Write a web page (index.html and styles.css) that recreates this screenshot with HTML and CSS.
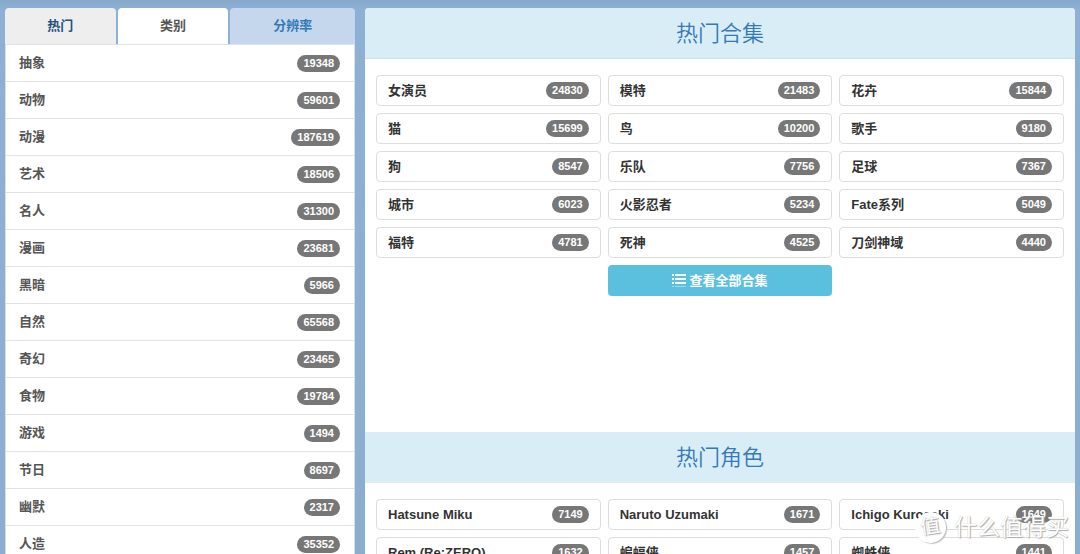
FILE: index.html
```html
<!DOCTYPE html>
<html lang="zh-CN">
<head>
<meta charset="utf-8">
<meta name="viewport" content="width=device-width, initial-scale=1">
<title>热门合集</title>
<link rel="stylesheet" href="styles.css">
</head>
<body>
<div class="page">
  <aside class="sidebar">
    <nav class="tabs">
      <button class="tab tab-hot" type="button">热门</button>
      <button class="tab tab-active" type="button">类别</button>
      <button class="tab tab-wide" type="button">分辨率</button>
    </nav>
    <div class="categories">
      <a class="category" href="#">抽象<span class="badge">19348</span></a>
      <a class="category" href="#">动物<span class="badge">59601</span></a>
      <a class="category" href="#">动漫<span class="badge">187619</span></a>
      <a class="category" href="#">艺术<span class="badge">18506</span></a>
      <a class="category" href="#">名人<span class="badge">31300</span></a>
      <a class="category" href="#">漫画<span class="badge">23681</span></a>
      <a class="category" href="#">黑暗<span class="badge">5966</span></a>
      <a class="category" href="#">自然<span class="badge">65568</span></a>
      <a class="category" href="#">奇幻<span class="badge">23465</span></a>
      <a class="category" href="#">食物<span class="badge">19784</span></a>
      <a class="category" href="#">游戏<span class="badge">1494</span></a>
      <a class="category" href="#">节日<span class="badge">8697</span></a>
      <a class="category" href="#">幽默<span class="badge">2317</span></a>
      <a class="category" href="#">人造<span class="badge">35352</span></a>
    </div>
  </aside>
  <main class="content">
    <section class="collections">
      <h2 class="heading">热门合集</h2>
      <div class="cards">
        <a class="card" href="#">女演员<span class="badge">24830</span></a>
        <a class="card" href="#">模特<span class="badge">21483</span></a>
        <a class="card" href="#">花卉<span class="badge">15844</span></a>
        <a class="card" href="#">猫<span class="badge">15699</span></a>
        <a class="card" href="#">鸟<span class="badge">10200</span></a>
        <a class="card" href="#">歌手<span class="badge">9180</span></a>
        <a class="card" href="#">狗<span class="badge">8547</span></a>
        <a class="card" href="#">乐队<span class="badge">7756</span></a>
        <a class="card" href="#">足球<span class="badge">7367</span></a>
        <a class="card" href="#">城市<span class="badge">6023</span></a>
        <a class="card" href="#">火影忍者<span class="badge">5234</span></a>
        <a class="card" href="#">Fate系列<span class="badge">5049</span></a>
        <a class="card" href="#">福特<span class="badge">4781</span></a>
        <a class="card" href="#">死神<span class="badge">4525</span></a>
        <a class="card" href="#">刀剑神域<span class="badge">4440</span></a>
        <a class="view-all" href="#">
          <svg class="list-icon" viewBox="0 0 14 13" aria-hidden="true">
            <path d="M0 0h2v2H0zM3 0h11v2H3zM0 4h2v2H0zM3 4h11v2H3zM0 8h2v2H0zM3 8h11v2H3z"/>
            <path class="list-icon-faint" d="M0 12h2v1H0zM3 12h11v1H3z"/>
          </svg>
          查看全部合集
        </a>
      </div>
    </section>
    <section class="characters">
      <h2 class="heading">热门角色</h2>
      <div class="cards">
        <a class="card" href="#">Hatsune Miku<span class="badge">7149</span></a>
        <a class="card" href="#">Naruto Uzumaki<span class="badge">1671</span></a>
        <a class="card" href="#">Ichigo Kurosaki<span class="badge">1649</span></a>
        <a class="card" href="#">Rem (Re:ZERO)<span class="badge">1632</span></a>
        <a class="card" href="#">蝙蝠侠<span class="badge">1457</span></a>
        <a class="card" href="#">蜘蛛侠<span class="badge">1441</span></a>
      </div>
    </section>
  </main>
  <div class="watermark"><span class="watermark-mark">值</span><span class="watermark-text">什么值得买</span></div>
</div>
</body>
</html>
```
FILE: styles.css
```css
* {
  box-sizing: border-box;
}

body {
  margin: 0;
  background: #8badd0 linear-gradient(#86a9cc, #8db0d4 10px, #8badd0);
  color: #333;
  font: bold 13px/20px "Liberation Sans", "Noto Sans CJK SC", sans-serif;
}

a {
  color: inherit;
  text-decoration: none;
}

.page {
  position: relative;
  display: grid;
  grid-template-columns: 350fr 710fr;
  gap: 10px;
  height: 100vh;
  padding: 8px 5px 0;
  overflow: hidden;
}

.sidebar {
  min-width: 0;
}

.tabs {
  display: grid;
  grid-template-columns: 111fr 111fr 125fr;
  gap: 2px;
}

.tab {
  height: 36px;
  padding: 0;
  border: 0;
  border-radius: 4px 4px 0 0;
  font: inherit;
}

.tab-hot {
  background: #eee;
  color: #23527c;
}

.tab-active {
  background: #fff;
  color: #555;
}

.tab-wide {
  background: #c5d7ec;
  color: #337ab7;
}

.categories {
  border: 1px solid #ddd;
  border-top: 0;
  background: #fff;
}

.category {
  display: flex;
  align-items: center;
  justify-content: space-between;
  height: 37px;
  padding: 0 14px 0 13px;
  border-top: 1px solid #e2e2e2;
  color: #555;
}

.badge {
  padding: 0 6px;
  border-radius: 9px;
  background: #777;
  color: #fff;
  font-size: 11px;
  line-height: 17px;
}

.content {
  min-width: 0;
  border-radius: 4px 4px 0 0;
  background: #fff;
  overflow: hidden;
}

.collections {
  min-height: 424px;
}

.heading {
  margin: 0;
  padding: 11px 10px 9px;
  border-bottom: 1px solid #c4e8f0;
  background: #d9edf7;
  color: #337ab7;
  font-size: 22px;
  font-weight: 350;
  line-height: 30px;
  text-align: center;
}

.characters .heading {
  border-bottom-color: #d9edf7;
}

.cards {
  display: grid;
  grid-template-columns: repeat(3, 1fr);
  gap: 7px;
  padding: 16px 11px;
}

.card {
  display: flex;
  align-items: center;
  justify-content: space-between;
  height: 31px;
  padding: 0 11px;
  border: 1px solid #ddd;
  border-radius: 4px;
}

.view-all {
  grid-column: 2;
  display: flex;
  align-items: center;
  justify-content: center;
  gap: 3px;
  height: 31px;
  border-radius: 4px;
  background: #5bc0de;
  color: #fff;
}

.list-icon {
  width: 14px;
  height: 13px;
  fill: #fff;
}

.list-icon-faint {
  opacity: 0.4;
}

.watermark {
  position: absolute;
  right: 11px;
  bottom: 11px;
  display: flex;
  align-items: center;
  gap: 8px;
  color: #fff;
  font-size: 23px;
  font-weight: 400;
  line-height: 32px;
  text-shadow: 1px 1px 1px #aaa, 0 0 1px #bbb;
}

.watermark-mark {
  width: 31px;
  height: 31px;
  border-radius: 50%;
  background: #fff;
  box-shadow: 1px 1px 1px #bbb;
  font-size: 20px;
  line-height: 29px;
  text-align: center;
  transform: rotate(-8deg);
}
```
